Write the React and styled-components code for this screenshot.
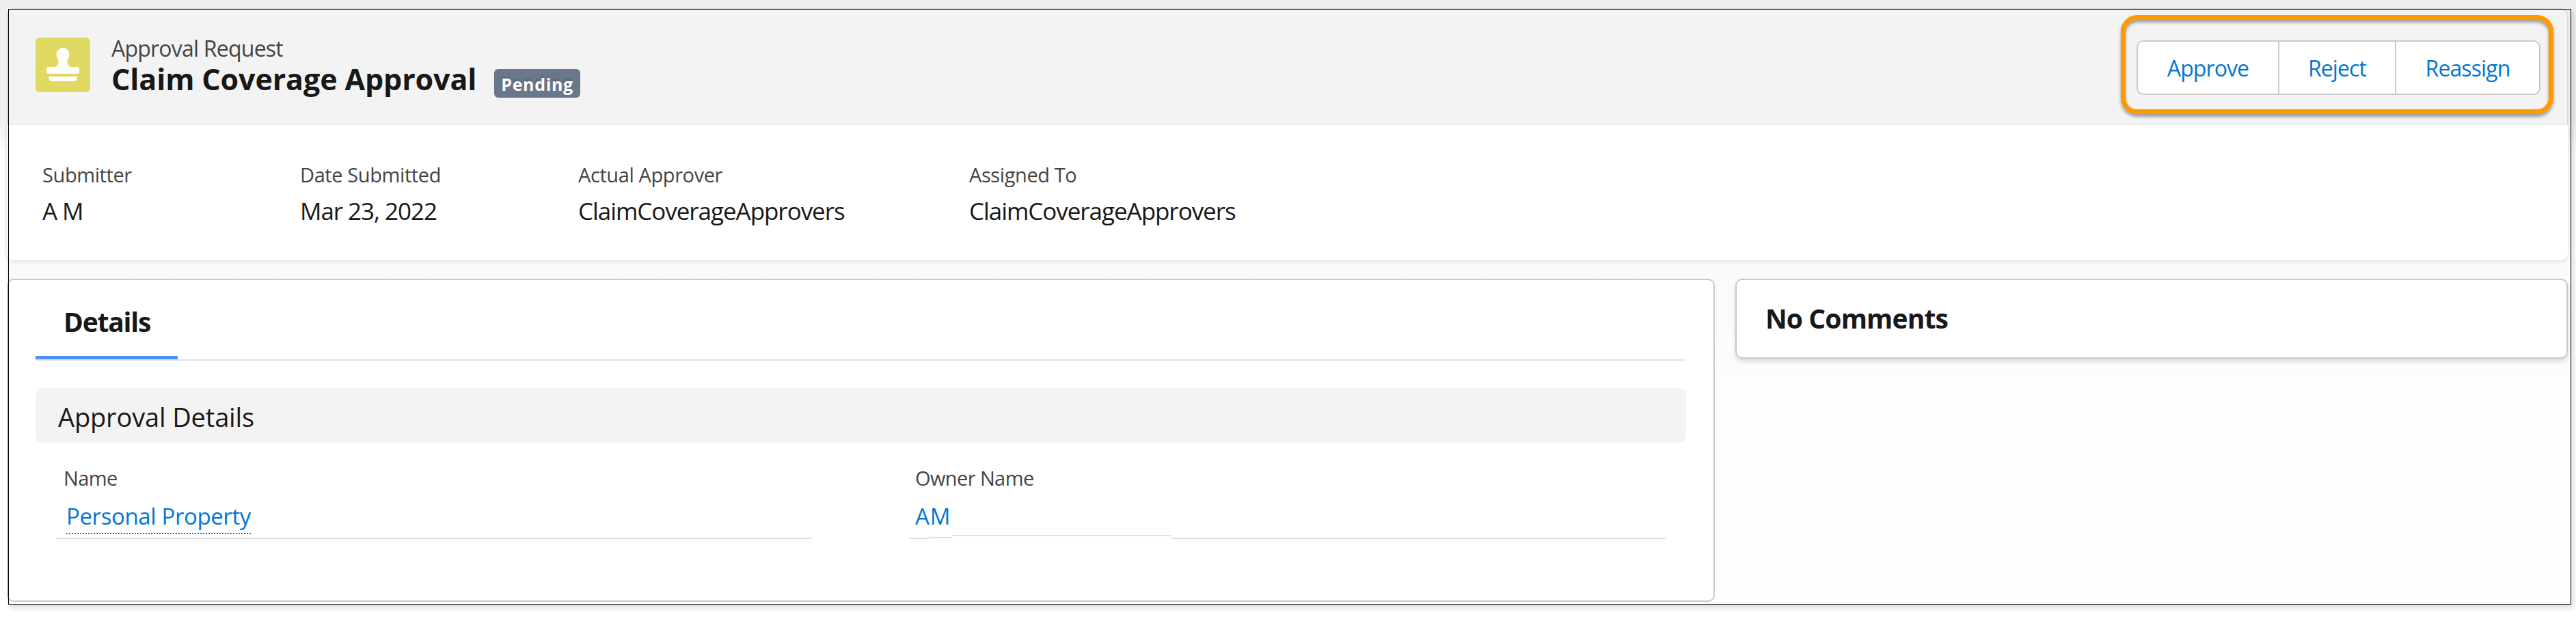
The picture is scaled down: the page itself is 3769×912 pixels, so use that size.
import React from 'react'
import styled, { createGlobalStyle } from 'styled-components'

const GlobalStyle = createGlobalStyle`
  html, body {
    margin: 0;
    background: linear-gradient(#efefef 0, #f0f0f0 180px, #fff 230px);
  }
  body {
    min-height: 912px;
    font-family: "Open Sans", "Noto Sans", sans-serif;
  }
`

const Sheet = styled.div`
  position: relative;
  box-sizing: border-box;
  width: 3748px;
  height: 872px;
  margin: 12px 0 0 10px;
  background: linear-gradient(#fafafa 380px, #fdfdfd 560px);

  &::after {
    content: '';
    position: absolute;
    left: 2px;
    top: 1px;
    width: 3748px;
    height: 870px;
    border: 1px solid #000;
    box-shadow: 3px 4px 8px rgba(0, 0, 0, 0.16);
    pointer-events: none;
  }
`

const Header = styled.header`
  box-sizing: border-box;
  display: flex;
  align-items: flex-start;
  height: 171px;
  padding: 36px 39px 0 40px;
  background: #f3f3f3;
  border: 2px solid #dcdcdc;
  border-bottom: 0;
  border-radius: 10px 10px 0 0;
`

const IconTile = styled.div`
  flex: none;
  width: 80px;
  height: 80px;
  margin: 5px 31px 0 0;
  border-radius: 6px;
  background: #dfd961;

  svg {
    display: block;
  }
`

const HeaderText = styled.div`
  flex: 1;
  margin-top: 1px;
`

const Eyebrow = styled.div`
  font-size: 32px;
  line-height: 40px;
  letter-spacing: -0.78px;
  color: #444;
`

const TitleRow = styled.div`
  display: flex;
  align-items: flex-start;
  margin-top: 0;
`

const Title = styled.h1`
  margin: 0;
  font-size: 43px;
  line-height: 50px;
  letter-spacing: -0.12px;
  font-weight: 700;
  color: #181818;
`

const Badge = styled.span`
  box-sizing: border-box;
  height: 42px;
  margin: 10px 0 0 26px;
  padding: 0 10px;
  border-radius: 6px;
  background: #697889;
  color: #fff;
  font-size: 25px;
  line-height: 44px;
  letter-spacing: 0.65px;
  font-weight: 700;
  text-shadow: -1px -4px 0 #5d6b7c;
`

const ButtonGroup = styled.div`
  position: relative;
  display: flex;
  flex: none;
  height: 80px;
  margin-top: 9px;
  box-sizing: border-box;
  border: 2px solid #c9c9c9;
  border-radius: 10px;
  background: #fff;
`

// orange annotation drawn over the screenshot
const Callout = styled.div`
  position: absolute;
  left: -25px;
  right: -21px;
  top: -39px;
  bottom: -30px;
  border: 7px solid #ff9900;
  border-radius: 24px;
  box-shadow: 0 4px 4px rgba(0, 0, 0, 0.35), inset 0 4px 4px rgba(0, 0, 0, 0.35);
  pointer-events: none;
`

const ActionButton = styled.button`
  box-sizing: border-box;
  width: ${p => p.$width}px;
  padding: 2px 0 0;
  border: 0;
  border-left: ${p => (p.$first ? '0' : '2px solid #c9c9c9')};
  background: none;
  color: #0176d3;
  font-family: inherit;
  font-size: 32px;
  letter-spacing: -0.9px;
  line-height: 74px;
`

const Summary = styled.section`
  box-sizing: border-box;
  display: grid;
  grid-template-columns: 377px 407px 572px 1fr;
  height: 198px;
  margin-right: 1px;
  padding: 55px 0 0 52px;
  background: #fff;
  border-radius: 0 0 10px 10px;
  box-shadow: 0 2px 6px rgba(0, 0, 0, 0.12);
`

const MetaLabel = styled.div`
  font-size: 29px;
  line-height: 36px;
  letter-spacing: -0.4px;
  color: #444;
`

const MetaValue = styled.div`
  margin-top: 14px;
  font-size: 35px;
  line-height: 42px;
  letter-spacing: -1.05px;
  color: #181818;
`

const CardRow = styled.div`
  display: flex;
  align-items: flex-start;
  gap: 30px;
  margin-top: 27px;
`

const DetailsCard = styled.section`
  box-sizing: border-box;
  width: 2499px;
  height: 473px;
  padding: 0 40px 0 40px;
  background: #fff;
  border: 2px solid #c9c9c9;
  border-radius: 10px;
`

const TabBar = styled.div`
  display: flex;
  border-bottom: 2px solid #e3e3e3;
`

const Tab = styled.div`
  box-sizing: border-box;
  width: 208px;
  padding: 37px 0 26px 41px;
  border-bottom: 5px solid #4a90f5;
  font-size: 39px;
  line-height: 48px;
  letter-spacing: -1.2px;
  font-weight: 700;
  color: #181818;
`

const SectionBar = styled.div`
  box-sizing: border-box;
  height: 80px;
  margin-top: 40px;
  padding: 17px 0 0 33px;
  border-radius: 10px;
  background: #f3f3f3;
`

const SectionTitle = styled.h2`
  margin: 0;
  font-size: 38px;
  line-height: 50px;
  letter-spacing: -0.15px;
  font-weight: 400;
  color: #181818;
`

const FieldGrid = styled.div`
  display: grid;
  grid-template-columns: 1106px 1107px;
  column-gap: 142px;
  margin-top: 34px;
  padding-left: 30px;
`

const FieldLabel = styled.div`
  margin-left: ${p => p.$indent}px;
  font-size: 29px;
  line-height: 36px;
  letter-spacing: -0.6px;
  color: #444;
`

const FieldLink = styled.a`
  display: block;
  width: fit-content;
  margin: 18px 0 5px ${p => p.$indent}px;
  padding-bottom: 4px;
  border-bottom: 2px ${p => (p.$dotted ? 'dotted #0176d3' : 'solid transparent')};
  color: #0176d3;
  font-size: 33px;
  line-height: 40px;
  letter-spacing: ${p => p.$tracking}px;
`

const Rule = styled.div`
  height: 2px;
  background: #e0e0e0;
`

const SteppedRule = styled.div`
  display: flex;
  align-items: flex-start;
  height: 5px;
  margin-top: -4px;
`

const RuleStep = styled.span`
  display: block;
  width: ${p => p.$width}px;
  flex: ${p => (p.$width ? 'none' : 1)};
  height: 2px;
  margin-top: ${p => p.$drop}px;
  background: #e0e0e0;
`

const CommentsCard = styled.section`
  box-sizing: border-box;
  width: 1218px;
  height: 117px;
  padding: 32px 0 0 42px;
  background: #fff;
  border: 2px solid #c9c9c9;
  border-radius: 10px;
  box-shadow: 0 4px 6px rgba(0, 0, 0, 0.14);
`

const CommentsTitle = styled.h2`
  margin: 0;
  font-size: 39px;
  line-height: 48px;
  letter-spacing: -0.87px;
  font-weight: 700;
  color: #181818;
`

const StampIcon = () => (
  <svg width="80" height="80" viewBox="0 0 80 80" fill="#fff">
    <path d="M40 15C45.5 15 49.5 19.5 49.5 25C49.5 29 47 31.5 46.5 34C46 38 48 41.5 51 43H61Q64 43 64 46V50Q64 53 61 53H19Q16 53 16 50V46Q16 43 19 43H29C32 41.5 34 38 33.5 34C33 31.5 30.5 29 30.5 25C30.5 19.5 34.5 15 40 15Z" />
    <path d="M19 57H61V58Q61 64 55 64H25Q19 64 19 58Z" />
  </svg>
)

const meta = [
  { label: 'Submitter', value: 'A M' },
  { label: 'Date Submitted', value: 'Mar 23, 2022' },
  { label: 'Actual Approver', value: 'ClaimCoverageApprovers' },
  { label: 'Assigned To', value: 'ClaimCoverageApprovers' },
]

export default function App() {
  return (
    <>
      <GlobalStyle />
      <Sheet>
        <Header>
          <IconTile>
            <StampIcon />
          </IconTile>
          <HeaderText>
            <Eyebrow>Approval Request</Eyebrow>
            <TitleRow>
              <Title>Claim Coverage Approval</Title>
              <Badge>Pending</Badge>
            </TitleRow>
          </HeaderText>
          <ButtonGroup>
            <ActionButton $first $width={205}>Approve</ActionButton>
            <ActionButton $width={171}>Reject</ActionButton>
            <ActionButton $width={211}>Reassign</ActionButton>
            <Callout />
          </ButtonGroup>
        </Header>

        <Summary>
          {meta.map(item => (
            <div key={item.label}>
              <MetaLabel>{item.label}</MetaLabel>
              <MetaValue>{item.value}</MetaValue>
            </div>
          ))}
        </Summary>

        <CardRow>
          <DetailsCard>
            <TabBar>
              <Tab>Details</Tab>
            </TabBar>
            <SectionBar>
              <SectionTitle>Approval Details</SectionTitle>
            </SectionBar>
            <FieldGrid>
              <div>
                <FieldLabel $indent={11}>Name</FieldLabel>
                <FieldLink $indent={15} $dotted $tracking={-0.39}>Personal Property</FieldLink>
                <Rule />
              </div>
              <div>
                <FieldLabel $indent={9}>Owner Name</FieldLabel>
                <FieldLink $indent={9} $tracking={1}>AM</FieldLink>
                <SteppedRule>
                  <RuleStep $width={30} $drop={4} />
                  <RuleStep $width={33} $drop={3} />
                  <RuleStep $width={321} $drop={0} />
                  <RuleStep $drop={4} />
                </SteppedRule>
              </div>
            </FieldGrid>
          </DetailsCard>
          <CommentsCard>
            <CommentsTitle>No Comments</CommentsTitle>
          </CommentsCard>
        </CardRow>
      </Sheet>
    </>
  )
}
